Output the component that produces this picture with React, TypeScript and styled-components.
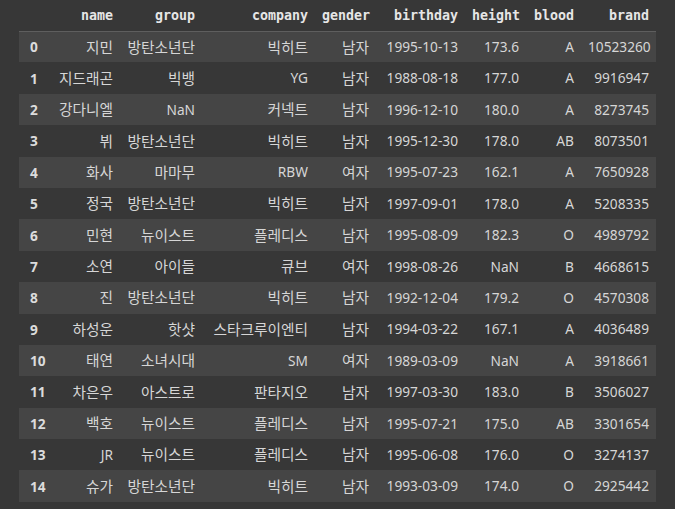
import React from "react";
import styled, { createGlobalStyle } from "styled-components";

const GlobalStyle = createGlobalStyle`
  html, body {
    margin: 0;
    padding: 0;
    background: #373737;
  }
`;

const Page = styled.div`
  padding: 0 0 6px 19px;
  background: #373737;
  min-height: 509px;
  box-sizing: border-box;
`;

const Frame = styled.table`
  border-collapse: collapse;
  table-layout: fixed;
  width: 637px;
  color: #d6d6d6;
  font-family: "Noto Sans", "Noto Sans CJK KR", sans-serif;
  font-size: 13.7px;
`;

const HeadRow = styled.tr`
  height: 31px;
  border-bottom: 1px solid #5e5e5e;
`;

const HeadCell = styled.th`
  padding: 0 7px;
  text-align: right;
  font-family: "DejaVu Sans Mono", monospace;
  font-weight: bold;
  font-size: 13.3px;
  color: #e6e6e6;
  white-space: nowrap;
  overflow: visible;
`;

const Row = styled.tr<{ $odd: boolean }>`
  height: 31.4px;
  background: ${(p) => (p.$odd ? "#454545" : "#373737")};
`;

const IndexCell = styled.th`
  padding: 0 0 0 11px;
  text-align: left;
  font-weight: bold;
  font-size: 13.7px;
  color: #dcdcdc;
`;

const Cell = styled.td<{ $ko: boolean }>`
  padding: 0 7px;
  text-align: right;
  white-space: nowrap;
  line-height: 1;
  font-size: ${(p) => (p.$ko ? "14.7px" : "13.7px")};
`;

const widths = [33, 68, 82, 113, 61, 89, 61, 55, 75];
const columns = ["name", "group", "company", "gender", "birthday", "height", "blood", "brand"];

const rows: string[][] = [
  ["지민", "방탄소년단", "빅히트", "남자", "1995-10-13", "173.6", "A", "10523260"],
  ["지드래곤", "빅뱅", "YG", "남자", "1988-08-18", "177.0", "A", "9916947"],
  ["강다니엘", "NaN", "커넥트", "남자", "1996-12-10", "180.0", "A", "8273745"],
  ["뷔", "방탄소년단", "빅히트", "남자", "1995-12-30", "178.0", "AB", "8073501"],
  ["화사", "마마무", "RBW", "여자", "1995-07-23", "162.1", "A", "7650928"],
  ["정국", "방탄소년단", "빅히트", "남자", "1997-09-01", "178.0", "A", "5208335"],
  ["민현", "뉴이스트", "플레디스", "남자", "1995-08-09", "182.3", "O", "4989792"],
  ["소연", "아이들", "큐브", "여자", "1998-08-26", "NaN", "B", "4668615"],
  ["진", "방탄소년단", "빅히트", "남자", "1992-12-04", "179.2", "O", "4570308"],
  ["하성운", "핫샷", "스타크루이엔티", "남자", "1994-03-22", "167.1", "A", "4036489"],
  ["태연", "소녀시대", "SM", "여자", "1989-03-09", "NaN", "A", "3918661"],
  ["차은우", "아스트로", "판타지오", "남자", "1997-03-30", "183.0", "B", "3506027"],
  ["백호", "뉴이스트", "플레디스", "남자", "1995-07-21", "175.0", "AB", "3301654"],
  ["JR", "뉴이스트", "플레디스", "남자", "1995-06-08", "176.0", "O", "3274137"],
  ["슈가", "방탄소년단", "빅히트", "남자", "1993-03-09", "174.0", "O", "2925442"],
];

const isKorean = (s: string) => /[\uac00-\ud7a3]/.test(s);

const App = () => {
  return (
    <Page>
      <GlobalStyle />
      <Frame>
        <colgroup>
          {widths.map((w, i) => (
            <col key={i} style={{ width: w }} />
          ))}
        </colgroup>
        <thead>
          <HeadRow>
            <HeadCell />
            {columns.map((c) => (
              <HeadCell key={c}>{c}</HeadCell>
            ))}
          </HeadRow>
        </thead>
        <tbody>
          {rows.map((r, i) => (
            <Row key={i} $odd={i % 2 === 0}>
              <IndexCell>{i}</IndexCell>
              {r.map((v, j) => (
                <Cell key={j} $ko={isKorean(v)}>
                  {v}
                </Cell>
              ))}
            </Row>
          ))}
        </tbody>
      </Frame>
    </Page>
  );
};

export default App;
